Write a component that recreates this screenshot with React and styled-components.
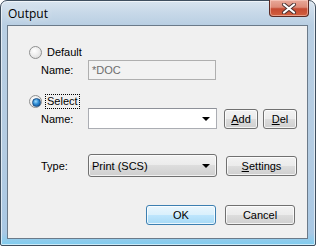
import React from "react";
import styled, { createGlobalStyle } from "styled-components";

const GlobalStyle = createGlobalStyle`
  html, body {
    margin: 0;
    padding: 0;
    background: #ffffff;
  }
  * {
    box-sizing: border-box;
  }
`;

const App = () => {
  return (
    <>
      <GlobalStyle />
      <Window>
        <TitleBar>
          <Title>Output</Title>
          <CloseButton>
            <svg width="16" height="11" viewBox="0 0 16 11">
              <path
                d="M3 1.5 L13 9.5 M13 1.5 L3 9.5"
                stroke="#4a3030"
                strokeWidth="4"
                strokeLinecap="round"
              />
              <path
                d="M3 1.5 L13 9.5 M13 1.5 L3 9.5"
                stroke="#ffffff"
                strokeWidth="2.2"
                strokeLinecap="round"
              />
            </svg>
          </CloseButton>
        </TitleBar>
        <Client>
          <RadioRow $mt={19}>
            <Radio />
            <RadioLabel>Default</RadioLabel>
          </RadioRow>
          <FieldRow $mt={1} $h={20}>
            <Label>Name:</Label>
            <TextBox $w={128} disabled>
              *DOC
            </TextBox>
          </FieldRow>
          <RadioRow $mt={14}>
            <Radio $checked />
            <RadioLabel $focused>Select</RadioLabel>
          </RadioRow>
          <FieldRow $mt={0} $h={21}>
            <Label>Name:</Label>
            <ComboEdit $w={129}>
              <Arrow />
            </ComboEdit>
            <Button $w={34} $ml={7}>
              <u>A</u>dd
            </Button>
            <Button $w={34} $ml={5}>
              <u>D</u>el
            </Button>
          </FieldRow>
          <FieldRow $mt={25} $h={23}>
            <Label>Type:</Label>
            <ComboList $w={129}>
              Print (SCS)
              <Arrow />
            </ComboList>
            <Button $w={71} $ml={9}>
              <u>S</u>ettings
            </Button>
          </FieldRow>
          <ButtonRow>
            <Button $w={70} $default>
              OK
            </Button>
            <Button $w={70} $ml={9}>
              Cancel
            </Button>
          </ButtonRow>
        </Client>
      </Window>
    </>
  );
};

export default App;

const Window = styled.div`
  width: 316px;
  height: 246px;
  display: flex;
  flex-direction: column;
  padding: 0 7px 6px 6px;
  border: 1px solid #3f4f5f;
  border-radius: 7px 7px 2px 2px;
  background: linear-gradient(
    to bottom,
    #d8e4ef 0px,
    #c7d8e8 12px,
    #b9cfe3 24px,
    #b4cce2 60%,
    #a9c8e4 95%,
    #7fcdf0 100%
  );
  box-shadow: inset 0 0 0 1px rgba(255, 255, 255, 0.6);
`;

const TitleBar = styled.div`
  height: 24px;
  display: flex;
  align-items: flex-start;
  padding-left: 1px;
`;

const Title = styled.div`
  padding-top: 5px;
  font-family: "Open Sans", "Liberation Sans", sans-serif;
  font-size: 12px;
  line-height: 16px;
  color: #000000;
  text-shadow: 0 0 6px rgba(255, 255, 255, 0.9);
`;

const CloseButton = styled.div`
  margin-left: auto;
  margin-right: -1px;
  margin-top: -1px;
  width: 40px;
  height: 17px;
  display: flex;
  align-items: center;
  justify-content: center;
  border: 1px solid #5b2a24;
  border-top: none;
  border-radius: 0 0 4px 4px;
  background: linear-gradient(
    to bottom,
    #e9a99a 0%,
    #dd8b78 45%,
    #c54a32 55%,
    #d2603f 100%
  );
  box-shadow: inset 0 0 0 1px rgba(255, 220, 210, 0.5);
`;

const Client = styled.div`
  flex: 1;
  display: flex;
  flex-direction: column;
  border: 1px solid #6b7a89;
  background: #f0f0f0;
  font-family: "Liberation Sans", Arial, sans-serif;
  font-size: 11px;
  color: #000000;
`;

const RadioRow = styled.div`
  height: 14px;
  margin-top: ${({ $mt }) => $mt}px;
  padding-left: 21px;
  display: flex;
  align-items: center;
`;

const Radio = styled.span`
  position: relative;
  width: 13px;
  height: 13px;
  border-radius: 50%;
  border: 1px solid #8e8f8f;
  background: radial-gradient(circle at 40% 35%, #ffffff 0%, #f0f0f0 40%, #d4d4d4 100%);

  &::after {
    content: "";
    display: ${({ $checked }) => ($checked ? "block" : "none")};
    position: absolute;
    left: 2px;
    top: 2px;
    width: 7px;
    height: 7px;
    border-radius: 50%;
    border: 1px solid #1b4f86;
    background: radial-gradient(circle at 40% 35%, #9fdcff 0%, #2d8bd3 45%, #0e4d96 100%);
  }
`;

const RadioLabel = styled.span`
  margin-left: 3px;
  padding: 0 1px;
  line-height: 13px;
  border: 1px dotted ${({ $focused }) => ($focused ? "#000000" : "transparent")};
`;

const FieldRow = styled.div`
  height: ${({ $h }) => $h}px;
  margin-top: ${({ $mt }) => $mt}px;
  padding-left: 33px;
  display: flex;
  align-items: center;
`;

const Label = styled.span`
  width: 47px;
`;

const TextBox = styled.div`
  width: ${({ $w }) => $w}px;
  height: 20px;
  display: flex;
  align-items: center;
  padding-left: 3px;
  border: 1px solid #afafaf;
  background: #f2f2f2;
  color: ${({ disabled }) => (disabled ? "#6d6d6d" : "#000000")};
`;

const ComboEdit = styled.div`
  position: relative;
  width: ${({ $w }) => $w}px;
  height: 21px;
  border: 1px solid #abadb3;
  border-top-color: #8e9199;
  background: #ffffff;
`;

const ComboList = styled.div`
  position: relative;
  width: ${({ $w }) => $w}px;
  height: 23px;
  display: flex;
  align-items: center;
  padding-left: 3px;
  border: 1px solid #707070;
  border-radius: 3px;
  background: linear-gradient(
    to bottom,
    #f3f3f3 0%,
    #ebebeb 50%,
    #dddddd 50%,
    #cfcfcf 100%
  );
  box-shadow: inset 0 0 0 1px rgba(255, 255, 255, 0.7);
`;

const Arrow = styled.span`
  position: absolute;
  right: 6px;
  top: 50%;
  margin-top: -2px;
  width: 0;
  height: 0;
  border-left: 4px solid transparent;
  border-right: 4px solid transparent;
  border-top: 4px solid #000000;
`;

const Button = styled.div`
  width: ${({ $w }) => $w}px;
  height: 20px;
  margin-left: ${({ $ml }) => $ml || 0}px;
  display: flex;
  align-items: center;
  justify-content: center;
  border: 1px solid ${({ $default }) => ($default ? "#3c7fb1" : "#707070")};
  border-radius: 3px;
  background: ${({ $default }) =>
    $default
      ? "linear-gradient(to bottom, #eaf6fd 0%, #d9f0fc 50%, #bee6fd 50%, #a7d9f5 100%)"
      : "linear-gradient(to bottom, #f2f2f2 0%, #ebebeb 50%, #dddddd 50%, #cfcfcf 100%)"};
  box-shadow: inset 0 0 0 1px rgba(255, 255, 255, 0.75);

  u {
    text-decoration: underline;
  }
`;

const ButtonRow = styled.div`
  margin-top: 28px;
  height: 20px;
  padding-right: 12px;
  display: flex;
  justify-content: flex-end;
`;
